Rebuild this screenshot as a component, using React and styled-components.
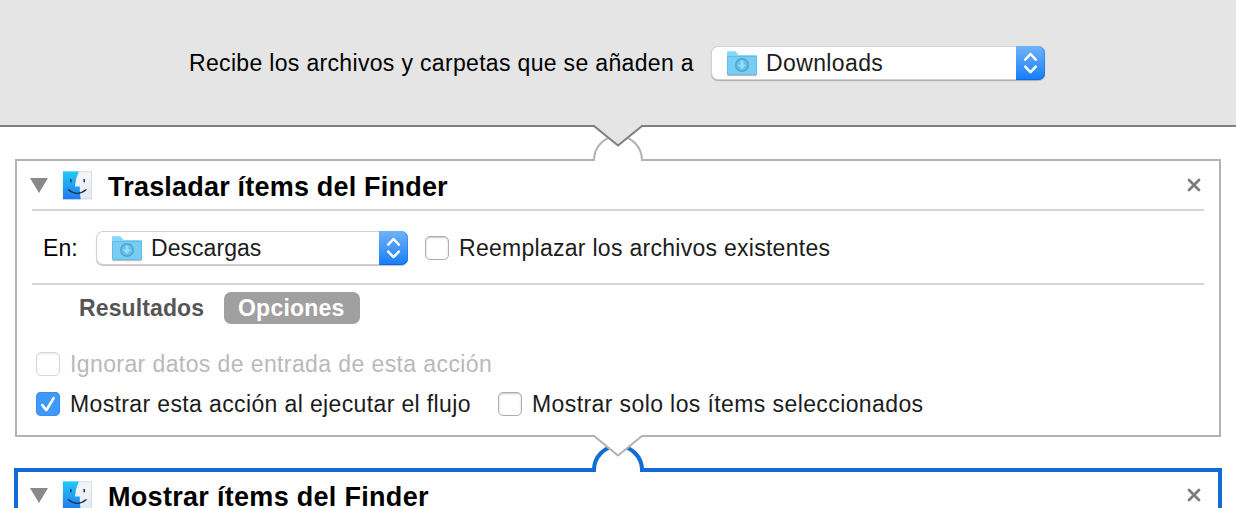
import React from "react";
import styled, { createGlobalStyle } from "styled-components";

const GlobalStyle = createGlobalStyle`
  * { box-sizing: border-box; }
  body {
    margin: 0;
    background: #fff;
    font-family: "Liberation Sans", Helvetica, Arial, sans-serif;
    font-size: 23px;
    color: #000;
  }
`;

const Window = styled.main`
  width: 1236px;
  height: 508px;
  overflow: hidden;
`;

const Header = styled.header`
  position: relative;
  z-index: 2;
  display: flex;
  align-items: flex-start;
  height: 127px;
  padding: 46px 0 0 189px;
  background: #e5e5e5;
  border-bottom: 2px solid #7f7f7f;
`;

const Text = styled.span`
  display: block;
  white-space: nowrap;
  line-height: 34px;
  letter-spacing: ${(p) => p.$spacing ?? 0.4}px;
  color: ${(p) => p.$color || "#1c1c1c"};
  width: ${(p) => (p.$width ? p.$width + "px" : "auto")};
`;

const Popup = styled.div`
  display: flex;
  width: ${(p) => p.$width}px;
  height: 34px;
  padding-left: 15px;
  border-radius: 7px;
  background: #fff;
  box-shadow: inset 0 0 0 1px rgba(0, 0, 0, 0.18), 0 1px 1px rgba(0, 0, 0, 0.25);
`;

const PopupText = styled(Text)`
  flex: 1;
  margin-left: 8px;
`;

const Stepper = styled.span`
  width: 29px;
  height: 34px;
  border-radius: 0 7px 7px 0;
  background: linear-gradient(#6db3f8, #4498f8 50%, #157efb);
  box-shadow: inset 0 -1px 0 #0c6be0, inset -1px 0 0 rgba(20, 105, 220, 0.4);
`;

const FolderSvg = styled.svg`
  display: block;
  margin-top: 4px;
`;

const Card = styled.section`
  position: relative;
  z-index: ${(p) => (p.$selected ? 0 : 1)};
  height: 278px;
  margin: ${(p) => (p.$selected ? "31px 14px 0" : "32px 15px 0")};
  padding: ${(p) => (p.$selected ? "0 14px" : "0 15px")};
  border: ${(p) => (p.$selected ? "4px solid #116cd8" : "2px solid #b2b2b2")};
`;

const TitleBar = styled.div`
  display: flex;
  height: ${(p) => (p.$selected ? 49 : 50)}px;
  border-bottom: 2px solid #d6d6d6;
  padding-top: ${(p) => (p.$selected ? 9 : 10)}px;
`;

const Triangle = styled.span`
  width: 0;
  height: 0;
  margin: 7px 14px 0 -2px;
  border: 9px solid transparent;
  border-top: 15px solid #8a8a8a;
  border-bottom: 0;
`;

const Title = styled.h2`
  flex: 1;
  margin: 0 0 0 15px;
  font-size: 27px;
  line-height: 33px;
  letter-spacing: ${(p) => p.$spacing}px;
  white-space: nowrap;
`;

const Close = styled.svg`
  margin: 7px 3px 0 0;
`;

const Settings = styled.div`
  display: flex;
  height: 74px;
  padding: 20px 0 0 11px;
  border-bottom: 2px solid #d6d6d6;
`;

const Tabs = styled.div`
  display: flex;
  padding: 7px 0 0 47px;
`;

const Tab = styled.span`
  height: 32px;
  line-height: 33px;
  font-weight: 700;
  white-space: nowrap;
  border-radius: 7px;
  letter-spacing: ${(p) => p.$spacing}px;
  ${(p) =>
    p.$active
      ? "width: 136px; padding-left: 14px; background: #a0a0a0; color: #fff;"
      : "width: 145px; color: #555;"}
`;

const Options = styled.div`
  display: flex;
  height: 34px;
  margin-top: ${(p) => p.$top}px;
  padding-left: 4px;
`;

const Box = styled.span`
  display: flex;
  width: 24px;
  height: 24px;
  margin: 5px 10px 0 ${(p) => p.$left || 0}px;
  border-radius: 5px;
  border: ${(p) => (p.$checked ? 0 : p.$disabled ? "1px solid #d9d9d9" : "1px solid #adadad")};
  background: ${(p) => (p.$checked ? "#3f99f8" : "#fff")};
  box-shadow: ${(p) =>
    p.$checked
      ? "inset 0 0 0 1px #3a8ff0"
      : `inset 0 1px 2px rgba(0, 0, 0, ${p.$disabled ? 0.1 : 0.22})`};
`;

const ConnectorSvg = styled.svg`
  position: absolute;
  left: ${(p) => p.$left}px;
  top: ${(p) => p.$top}px;
  z-index: ${(p) => p.$z || 0};
`;

function Folder() {
  return (
    <FolderSvg width="32" height="28" viewBox="0 0 32 28">
      <path d="M1.5 25.5h29" stroke="#000" strokeOpacity=".25" strokeWidth="1.4" />
      <path d="M1 2.2q0-1 1-1h7.5l3 3.8H30q1 0 1 1V24H1z" fill="#86d6f8" />
      <path d="M1.5 6.5h29v18h-29z" fill="#76cef5" stroke="#66bce5" />
      <circle cx="16" cy="15" r="6.3" fill="#69bee5" stroke="#4fa5d0" strokeWidth="1.5" />
      <path d="M14.5 10.6h3v4h2.9L16 19.2l-4.4-4.6h2.9z" fill="#90dffc" />
    </FolderSvg>
  );
}

function Finder() {
  return (
    <svg width="31" height="30" viewBox="0 0 31 30">
      <defs>
        <linearGradient id="face" x1="0" y1="0" x2="0" y2="1">
          <stop offset="0" stopColor="#20cafb" />
          <stop offset="1" stopColor="#2179ed" />
        </linearGradient>
        <linearGradient id="side" x1="0" y1="0" x2="0" y2="1">
          <stop offset="0" stopColor="#f6f6f8" />
          <stop offset="1" stopColor="#e2ebf5" />
        </linearGradient>
      </defs>
      <path d="M1 .7h28.5v27.3H1z" fill="url(#side)" stroke="#c9ced6" strokeWidth=".7" />
      <path d="M1 .5h15.8q-3.4 7.5-3.9 15.1h4.9q-.2 7 .9 12.6H1z" fill="url(#face)" />
      <path d="M8.8 8.5v2.2M22.2 8.5v2.2" stroke="#222d39" strokeWidth="1.5" strokeLinecap="round" />
      <path d="M6.5 18.8q8.8 7.2 17.5 0" fill="none" stroke="#20303f" strokeWidth="1.4" strokeLinecap="round" />
    </svg>
  );
}

function Select({ label, width, spacing }) {
  return (
    <Popup $width={width}>
      <Folder />
      <PopupText $spacing={spacing}>{label}</PopupText>
      <Stepper>
        <svg width="29" height="34" viewBox="0 0 29 34" fill="none" stroke="#fff" strokeWidth="2.5" strokeLinecap="round" strokeLinejoin="round">
          <path d="M9.2 13.6l5.3-5.6 5.3 5.6M9.2 20.6l5.3 5.6 5.3-5.6" />
        </svg>
      </Stepper>
    </Popup>
  );
}

function Checkbox({ checked, disabled, left }) {
  return (
    <Box $checked={checked} $disabled={disabled} $left={left}>
      {checked && (
        <svg width="24" height="24" viewBox="0 0 24 24">
          <path d="M6.3 13.1l4.1 5 7.2-12" fill="none" stroke="#fff" strokeWidth="2.6" strokeLinecap="round" strokeLinejoin="round" />
        </svg>
      )}
    </Box>
  );
}

function ActionTitle({ children, selected, spacing }) {
  return (
    <TitleBar $selected={selected}>
      <Triangle />
      <Finder />
      <Title $spacing={spacing}>{children}</Title>
      <Close width="14" height="14" viewBox="0 0 14 14">
        <path d="M2 2l10 10M12 2L2 12" stroke="#7d7d7d" strokeWidth="2.8" strokeLinecap="round" />
      </Close>
    </TitleBar>
  );
}

function Notch({ left, top, fill, stroke }) {
  return (
    <ConnectorSvg $left={left} $top={top} $z={3} width="52" height="24" viewBox="0 0 52 24">
      <path d="M1.6 0H50.4V2L26 21.5 1.6 2z" fill={fill} />
      <path d="M0 1H2L26 20.5 50 1H52" fill="none" stroke={stroke} strokeWidth="2" />
    </ConnectorSvg>
  );
}

function Socket({ left, top, stroke, size }) {
  return (
    <ConnectorSvg $left={left} $top={top} width="52" height="27" viewBox="0 0 52 27">
      <path d="M2 25a24 24 0 0 1 48 0v5H2z" fill="#fff" />
      <path d={`M2 ${25 + size / 2}V25a24 24 0 0 1 48 0v${size / 2}`} fill="none" stroke={stroke} strokeWidth={size} />
    </ConnectorSvg>
  );
}

export default function App() {
  return (
    <Window>
      <GlobalStyle />
      <Header>
        <Text $color="#000" $width={522} $spacing={0.33}>Recibe los archivos y carpetas que se añaden a</Text>
        <Select label="Downloads" width={334} spacing={0.38} />
        <Notch left={592} top={125} fill="#e5e5e5" stroke="#7f7f7f" />
      </Header>
      <Card>
        <Socket left={575} top={-26} stroke="#b2b2b2" size={2} />
        <ActionTitle spacing={0.2}>Trasladar ítems del Finder</ActionTitle>
        <Settings>
          <Text $color="#000" $width={53} $spacing={0.1}>En:</Text>
          <Select label="Descargas" width={312} spacing={0.05} />
          <Checkbox left={17} />
          <Text $spacing={0.28}>Reemplazar los archivos existentes</Text>
        </Settings>
        <Tabs>
          <Tab $spacing={0.12}>Resultados</Tab>
          <Tab $active $spacing={0.22}>Opciones</Tab>
        </Tabs>
        <Options $top={23}>
          <Checkbox disabled />
          <Text $color="#b9b9b9">Ignorar datos de entrada de esta acción</Text>
        </Options>
        <Options $top={6}>
          <Checkbox checked />
          <Text $width={428} $spacing={0.37}>Mostrar esta acción al ejecutar el flujo</Text>
          <Checkbox />
          <Text>Mostrar solo los ítems seleccionados</Text>
        </Options>
        <Notch left={575} top={274} fill="#fff" stroke="#b2b2b2" />
      </Card>
      <Card $selected>
        <Socket left={574} top={-27} stroke="#116cd8" size={4} />
        <ActionTitle selected spacing={0.3}>Mostrar ítems del Finder</ActionTitle>
      </Card>
    </Window>
  );
}
